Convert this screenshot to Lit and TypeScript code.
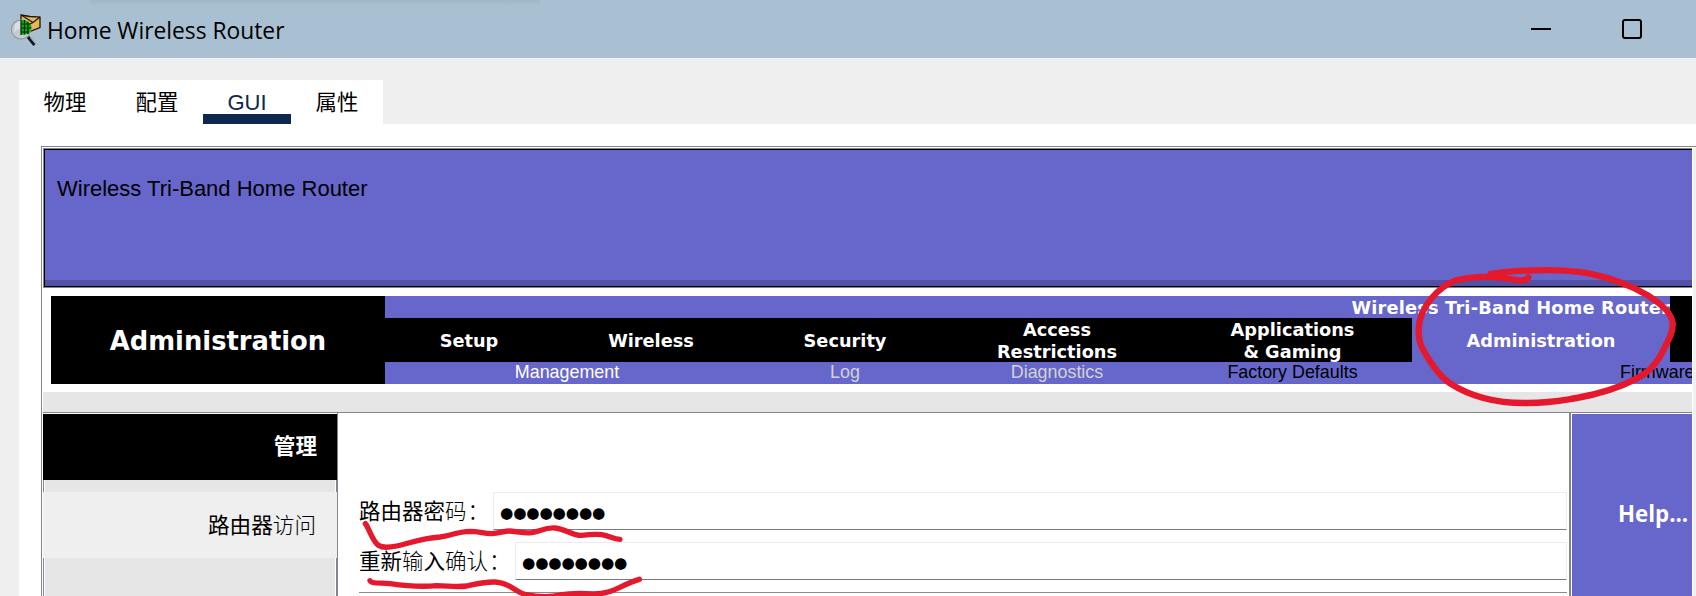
import { LitElement, html, css } from "lit";
import { customElement } from "lit/decorators.js";

@customElement("router-titlebar")
class RouterTitlebar extends LitElement {
  static styles = css`
    :host { display: flex; align-items: center; height: 58px; box-sizing: border-box; padding: 0 54px 0 10px; background: #a9c0d3; position: relative; }
    .glow { position: absolute; left: 90px; top: 0; width: 450px; height: 6px; background: linear-gradient(#9fb6c4, #a9c0d3); }
    .icon { width: 32px; height: 32px; margin-top: 1px; }
    .title { flex: 1; font: 22.8px/30px "Open Sans", "Noto Sans", sans-serif; color: #000; margin: 4px 0 0 5px; white-space: nowrap; }
    .min { width: 20px; height: 2px; background: #000; margin-right: 71px; }
    .max { width: 16px; height: 16px; border: 2px solid #000; border-radius: 3px; }
  `;
  render() {
    return html`
      <div class="glow"></div>
      <svg class="icon" viewBox="0 0 32 32">
        <path d="M11 1L20 2.5L30 3V13.5L21 17L11 14Z" fill="#e6b955" stroke="#1c1709" stroke-width="1.3"/>
        <path d="M12 1.5L23 8.5L30 3M20 10L23 8.5" fill="none" stroke="#1c1709" stroke-width="1.2"/>
        <circle cx="11" cy="15.5" r="9.6" fill="#c3cbd0" stroke="#929c9f" stroke-width="1.2"/>
        <path d="M5 10Q8 7 11 7V15Q7 15 4 18Z" fill="#d9dfe2"/>
        <path d="M11 6Q18 5 21.5 12Q21 17 18 20L11 21Z" fill="#08b010"/>
        <path d="M11 6V21M14.5 6V20.5M18 8V20M11 10H20.5M11 14H21.5M11 18H19.5" stroke="#042806" stroke-width="1.2"/>
        <path d="M18 23L24.5 31" stroke="#15181b" stroke-width="3"/>
        <path d="M20.5 24L26 30.5" stroke="#9aa4ab" stroke-width=".8"/>
      </svg>
      <div class="title">Home Wireless Router</div>
      <div class="min"></div>
      <div class="max"></div>
    `;
  }
}

@customElement("app-root")
class AppRoot extends LitElement {
  static styles = css`
    :host { display: block; position: relative; width: 1696px; height: 596px; overflow: hidden; background: #efefef; font-family: "Liberation Sans", "Noto Sans CJK SC", sans-serif; color: #000; }
    * { box-sizing: border-box; }
    .tabs { display: flex; width: 364px; height: 44px; margin: 22px 0 0 19px; background: #fff; font-size: 21.4px; line-height: 46px; }
    .tab { width: 92px; text-align: center; white-space: nowrap; }
    .tab.active { width: 88px; height: 44px; color: #0d274d; border-bottom: 10px solid #0d274d; font-size: 22px; }
    .page { margin-left: 19px; height: 472px; padding: 22px 0 0 22px; background: #fff; }
    .frame { height: 450px; border: 1px solid #82878f; border-width: 1px 0 0 1px; padding: 1px 0 0 1px; display: flex; }
    .view { width: 1649px; height: 448px; overflow: hidden; }
    .bar { flex: 1; margin-left: 1px; background: #f0f0f0; }
    .banner { height: 140px; border: 1px solid #82878f; border-right: 0; }
    .inner { height: 138px; border: 1px solid #000; border-right: 0; background: linear-gradient(#6766cb 130px, #5251a5 130px); padding: 25px 0 0 12px; font-size: 22px; line-height: 28px; white-space: nowrap; }
    .nav { display: flex; height: 88px; margin: 8px 0 8px 8px; }
    .section { width: 334px; background: #000; color: #fff; font: bold 25.8px/90px "DejaVu Sans", sans-serif; height: 88px; text-align: center; }
    .menus { flex: 1; min-width: 0; display: grid; grid-template-rows: 22px 44px 22px; background: #6766cb; }
    .line { display: flex; min-width: 0; overflow: hidden; }
    .b { font: bold 17.75px/22px "DejaVu Sans", sans-serif; color: #fff; }
    .device { width: 1285px; text-align: right; white-space: nowrap; letter-spacing: .2px; padding-top: 1px; }
    .fill { width: 22px; background: #000; }
    .item { flex: none; display: flex; align-items: center; justify-content: center; text-align: center; background: #000; white-space: pre-line; padding-top: 1px; }
    .w168 { width: 168px; } .w196 { width: 196px; } .w192 { width: 192px; } .w232 { width: 232px; } .w238 { width: 239px; } .w258 { width: 258px; } .w364 { width: 364px; }
    .item.on { background: #6766cb; }
    .sub { flex: none; text-align: center; font-size: 17.9px; line-height: 21px; white-space: nowrap; }
    .white { color: #fff; } .dim { color: #d2d2d2; }
    .firm { margin-left: 208px; }
    .spacer { height: 20px; background: #e6e6e6; }
    .body { display: flex; height: 184px; border-top: 1px solid #82878f; }
    .side { width: 295px; padding-top: 1px; border-right: 1px solid #82878f; font-size: 21.6px; }
    .gap { height: 12px; border-left: 1px solid #82878f; border-right: 1px solid #82878f; background: #e6e6e6; box-shadow: inset 1px 0 #fff, inset -1px 0 #fff; }
    .gap.tall { height: 38px; }
    .sidehead { height: 66px; background: #000; color: #fff; font-weight: bold; text-align: right; padding-right: 20px; line-height: 66px; }
    .sideitem { height: 66px; background: #efefef; text-align: right; padding-right: 21px; line-height: 68px; }
    .thin { font-weight: 300; }
    .form { width: 1231px; padding: 79px 2px 0 21px; font-size: 21.5px; }
    .row { display: flex; height: 38px; margin-bottom: 12px; }
    .label { line-height: 41px; white-space: nowrap; height: 38px; }
    .colon { margin-left: 1px; font-weight: 300; }
    .l1 { width: 134px; } .l2 { width: 156px; }
    .field { flex: 1; height: 38px; border: 1px solid #ececec; border-bottom: 1px solid #7a7a7a; border-radius: 1px; padding-left: 6px; font: 15.3px/41px "DejaVu Sans", sans-serif; letter-spacing: -.2px; }
    .rule { height: 1px; background: #8a8a8a; }
    .div { width: 2px; background: #82878f; margin-right: 1px; }
    .help { flex: 1; margin-top: 1px; background: #6766cb; color: #fff; font: bold 22.3px/200px "Open Sans", "Noto Sans", sans-serif; padding-left: 46px; white-space: nowrap; }
    .ink { position: absolute; inset: 0; width: 1696px; height: 596px; pointer-events: none; }
  `;
  render() {
    return html`
      <router-titlebar></router-titlebar>
      <div class="tabs">
        <div class="tab">物理</div><div class="tab">配置</div><div class="tab active">GUI</div><div class="tab">属性</div>
      </div>
      <div class="page"><div class="frame">
        <div class="view">
          <div class="banner"><div class="inner">Wireless Tri-Band Home Router</div></div>
          <div class="nav">
            <div class="section">Administration</div>
            <div class="menus">
              <div class="line b"><div class="device">Wireless Tri-Band Home Router</div><div class="fill"></div></div>
              <div class="line b">
                <div class="item w168">Setup</div><div class="item w196">Wireless</div><div class="item w192">Security</div><div class="item w232">Access<br>Restrictions</div><div class="item w238">Applications<br>&amp; Gaming</div><div class="item on w258">Administration</div><div class="fill"></div>
              </div>
              <div class="line">
                <div class="sub white w364">Management</div><div class="sub dim w192">Log</div><div class="sub dim w232">Diagnostics</div><div class="sub w238">Factory Defaults</div><div class="sub firm">Firmware Upgrade</div>
              </div>
            </div>
          </div>
          <div class="spacer"></div>
          <div class="body">
            <div class="side">
              <div class="sidehead">管理</div>
              <div class="gap"></div>
              <div class="sideitem">路由器<span class="thin">访问</span></div>
              <div class="gap tall"></div>
            </div>
            <div class="form">
              <div class="row"><div class="label l1">路由器密<span class="thin">码</span><span class="colon">：</span></div><div class="field">●●●●●●●●</div></div>
              <div class="row"><div class="label l2">重新<span class="thin">输</span>入<span class="thin">确认</span><span class="colon">：</span></div><div class="field">●●●●●●●●</div></div>
              <div class="rule"></div>
            </div>
            <div class="div"></div>
            <div class="help">Help...</div>
          </div>
        </div>
        <div class="bar"></div>
      </div></div>
      <svg class="ink" viewBox="0 0 1696 596" fill="none" stroke="#e5192d" stroke-linecap="round" stroke-linejoin="round">
        <g transform="translate(1340 250) scale(.33333)" stroke-width="19">
          <path d="M565 82C558 94 545 92 530 90C500 86 480 82 455 81C410 80 380 82 345 92C300 110 240 165 236 235C235 270 240 285 250 300C275 345 300 380 330 400C400 445 480 460 560 459C640 458 660 452 710 444C790 430 840 412 890 386C925 368 945 345 960 320C980 280 1000 250 998 220C994 185 960 160 920 134C870 105 810 84 750 71C680 58 620 59 560 62C520 63 480 68 452 72"/>
        </g>
        <g transform="translate(340 480) scale(.33333)" stroke-width="16">
          <path d="M76 131C90 150 95 180 115 196C130 206 150 202 170 198C210 190 240 175 300 171C330 168 350 155 390 154C420 154 430 161 455 161C480 160 490 153 510 153C540 155 550 161 575 158C600 154 615 142 645 144C680 148 700 168 725 166C750 163 765 162 785 164C810 168 820 177 840 178"/>
          <path d="M90 302C95 312 120 308 150 311C200 318 240 322 290 317C330 318 350 322 380 318C410 312 430 305 465 306C510 308 525 335 555 343C600 352 630 352 660 345C700 338 730 340 760 342C820 342 840 315 898 298"/>
        </g>
      </svg>
    `;
  }
}
